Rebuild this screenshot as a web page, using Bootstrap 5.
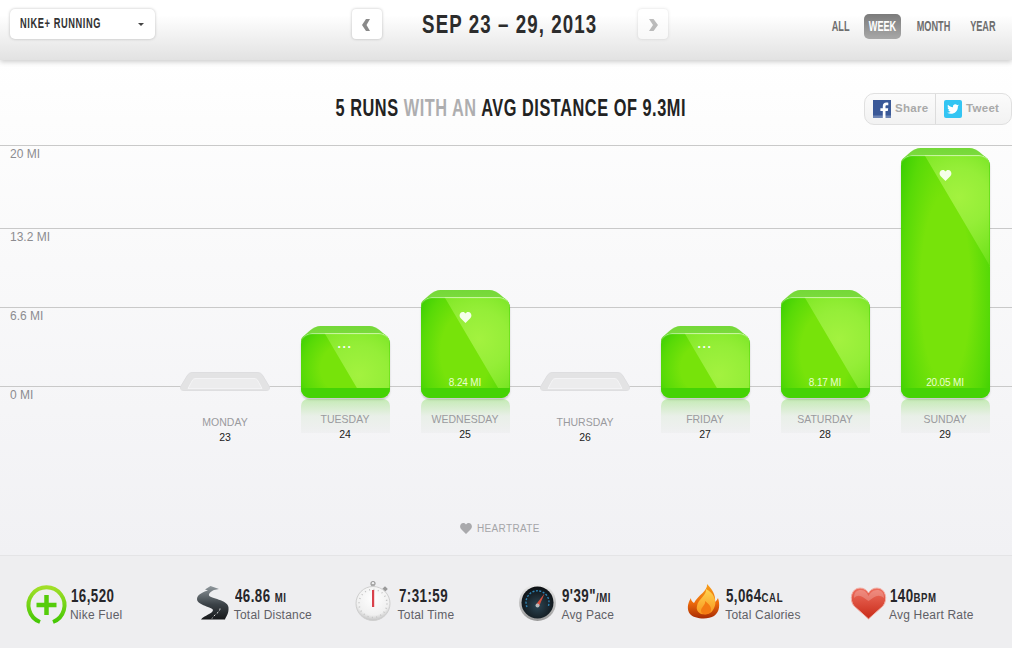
<!DOCTYPE html>
<html lang="en">
<head>
  <meta charset="UTF-8" />
  <meta name="viewport" content="width=device-width, initial-scale=1.0"/>
  <title>Nike+ Running</title>
  <link href="https://cdn.jsdelivr.net/npm/bootstrap@5.3.3/dist/css/bootstrap.min.css" rel="stylesheet">
  <style>
    html, body { height: 648px; overflow: hidden; }
    body { font-family: "Liberation Sans", Arial, sans-serif; background: linear-gradient(#fff 60px, #fdfdfd 120px, #f1f1f4 555px); color: #222; }

    /* no condensed face is installed, so the bold sans gets squeezed sideways */
    .cond { font-family: "Liberation Sans", Arial, sans-serif; font-weight: 700; }
    .squeeze { display: inline-block; white-space: nowrap; transform: scaleX(.74); transform-origin: center; }
    .squeeze-left { display: inline-block; white-space: nowrap; transform: scaleX(.74); transform-origin: left center; }
    .pick-btn .squeeze-left { transform: scaleX(.64); margin-right: -50px; }
    .date-title .squeeze { transform: scaleX(.72); }
    .run-title .squeeze { transform: scaleX(.68); }
    .range-pills .squeeze { transform: scaleX(.61); }

    /* top bar */
    .hdr-bar { height: 60px; flex: none; padding: 9px 17px 0 10px; background: linear-gradient(#fff 15px, #e2e2e2 60px); box-shadow: 0 2px 5px rgba(0,0,0,.2); position: relative; }
    .pick-btn { width: 145px; height: 30px; background: #fff; border: 0; border-radius: 5px; box-shadow: 0 0 3px rgba(0,0,0,.25); font-size: 14.500px; letter-spacing: .9px; color: #333; padding: 0 11px 0 10px; }
    .pick-btn::after { border-top-color: #444; border-width: 3px 3px 0; }
    .pick-btn:hover, .pick-btn:active { background: #fff; color: #333; }
    .arrow-btn { width: 30px; height: 30px; padding: 0; background: #fff; border: 0; border-radius: 4px; box-shadow: 0 0 3px rgba(0,0,0,.25); }
    .arrow-off { opacity: .55; }
    .date-title { font-size: 26px; line-height: 31px; letter-spacing: 1.500px; color: #2c2c2c; width: 256px; text-align: center; margin: 0; }
    .mid-group { position: absolute; left: 352px; top: 9px; }
    .range-pills { margin-top: 5px; margin-left: auto; }
    .range-pills .nav-link { font-size: 15px; padding: 0; height: 25px; color: #6e6e6e; border-radius: 5px; display: flex; align-items: center; justify-content: center; }
    .range-pills .nav-link.active { background: linear-gradient(#7b7b7b, #a8a8a8); color: #fff; }
    .pill-all { width: 16px; margin-right: 15px; }
    .pill-week { width: 37px; margin-right: 15px; }
    .pill-month { width: 34px; margin-right: 20px; }
    .pill-year { width: 25px; }

    /* headline + share */
    .head-row { height: 85px; flex: none; position: relative; }
    .run-title { font-size: 24px; letter-spacing: .8px; line-height: 26px; margin: 0; padding: 35px 0 0 10px; text-align: center; color: #222; }
    .run-title em { font-style: normal; color: #aeaeb0; }
    .share-box { position: absolute; right: 0; top: 33px; width: 148px; height: 32px; border: 1px solid #e0e0e0; border-radius: 10px; background: linear-gradient(#fbfbfb, #f2f2f2); }
    .share-item { font-size: 11.500px; font-weight: 700; color: #a9a9a9; letter-spacing: .3px; gap: 4px; padding-left: 8px; }
    .share-first { width: 70px; }
    .share-item + .share-item { border-left: 1px solid #dcdcdc; }
    .soc-ico { width: 18px; height: 18px; display: block; }

    /* chart */
    .chart-wrap { position: relative; flex: none; }
    .grid-row { border-top: 1px solid #c9c9c9; font-size: 12px; color: #8c8c90; padding: 1px 0 0 10px; line-height: 14px; }
    .grid-a { height: 83px; }
    .grid-b { height: 79px; }
    .days { position: absolute; left: 165px; top: 0; width: 840px; }
    .day-col { width: 120px; text-align: center; position: relative; }
    .bar-slot { height: 253px; display: flex; align-items: flex-end; justify-content: center; }
    .bar-box { width: 89px; position: relative; }
    .bar-lid { position: absolute; left: 0; right: 0; top: -7px; height: 16px; background: linear-gradient(#74d838, #82de42); clip-path: path('M20 0H69C73 0 76 2 79 4L87 11C88 12 89 14 89 16H0C0 14 1 12 2 11L10 4C13 2 16 0 20 0Z'); }
    .bar-face { position: relative; height: 100%; border-radius: 11px 11px 9px 9px; overflow: hidden; background: radial-gradient(ellipse 62% 85% at 50% 55%, #77e30a 45%, #58da07 78%, #3ccf03 100%); box-shadow: 0 2px 2px rgba(0,0,0,.18); color: #fff; }
    .bar-face::after { content: ""; position: absolute; inset: 0; border-radius: inherit; box-shadow: inset 0 2px 1px -1px rgba(255,255,255,.6); }
    .bar-shine { position: absolute; left: 0; right: 0; top: 0; height: 112px; clip-path: polygon(24px 0, 100% 0, 100% 100%, 90px 100%); background: radial-gradient(circle 72px at 58px 42px, #a3f23f 0, #95ee38 40%, rgba(125,232,40,.55) 100%); }
    .bar-band { position: absolute; left: 0; right: 0; bottom: 0; height: 10px; background: #45d305; }
    .bar-mark { position: absolute; top: 15px; left: 0; right: 0; text-align: center; line-height: 1; }
    .bar-mark svg { display: block; margin: 0 auto; }
    .bar-dots { top: 8px; font-size: 12px; font-weight: 700; letter-spacing: 1px; }
    .bar-dist { position: absolute; bottom: 9px; left: 0; right: 0; text-align: center; font-size: 10px; letter-spacing: -.15px; line-height: 12px; color: #eaffd0; }
    .bar-refl { position: absolute; left: 15.500px; top: 254px; width: 89px; height: 34px; border-radius: 7px 7px 0 0; background: linear-gradient(rgba(130,220,90,.42), rgba(225,236,222,.6) 50%, rgba(236,237,238,.6)); }
    .day-name { position: relative; font-size: 10.500px; line-height: 12px; color: #9a9a9e; padding-top: 15px; }
    .day-num { position: relative; font-size: 10.500px; line-height: 12px; color: #222; padding-top: 3px; }
    .day-none .day-name { padding-top: 18px; }
    .tray { display: block; margin-bottom: 7px; }

    .hr-legend { font-size: 10px; color: #a5a5a8; letter-spacing: .35px; padding-left: 460px; margin-top: 56px; gap: 5px; }

    /* stats */
    .stat-bar { margin-top: auto; height: 93px; flex: none; background: #eeeef0; border-top: 1px solid #e4e4e6; padding: 26px 0 0 26px; }
    .stat-cell { width: 163.800px; flex: none; }
    .stat-ico { width: 45px; height: 42px; flex: none; }
    .stat-ico svg { display: block; overflow: visible; }
    .stat-num { font-size: 18px; line-height: 20px; color: #26262a; letter-spacing: .6px; margin-top: 4px; white-space: nowrap; }
    .stat-num small { font-size: 13px; line-height: 1; letter-spacing: .8px; }
    .stat-lbl { font-size: 12px; line-height: 16px; color: #606066; white-space: nowrap; letter-spacing: .2px; margin: 1px 0 0 -1px; }
  </style>
</head>
<body class="d-flex flex-column">
  <!-- top bar -->
  <div class="hdr-bar d-flex align-items-start">
    <div class="dropdown">
      <button class="btn pick-btn cond dropdown-toggle d-flex align-items-center justify-content-between" type="button" data-bs-toggle="dropdown"><span class="squeeze-left">NIKE+ RUNNING</span></button>
    </div>
    <div class="mid-group d-flex align-items-start">
      <button class="btn arrow-btn" type="button" aria-label="Previous">
        <svg width="30" height="30" viewBox="0 0 30 30"><path d="M18 10 14.500 16 18 22H14L10 16 14 10Z" fill="#8a8a8a"/></svg>
      </button>
      <h1 class="date-title cond"><span class="squeeze">SEP 23 – 29, 2013</span></h1>
      <button class="btn arrow-btn arrow-off" type="button" aria-label="Next">
        <svg width="30" height="30" viewBox="0 0 30 30"><path d="M11 10 15 16 11 22H15.500L20 16 15.500 10Z" fill="#8a8a8a"/></svg>
      </button>
    </div>
    <ul class="nav range-pills cond flex-nowrap">
      <li class="nav-item pill-all"><a class="nav-link" href="#"><span class="squeeze">ALL</span></a></li>
      <li class="nav-item pill-week"><a class="nav-link active" href="#"><span class="squeeze">WEEK</span></a></li>
      <li class="nav-item pill-month"><a class="nav-link" href="#"><span class="squeeze">MONTH</span></a></li>
      <li class="nav-item pill-year"><a class="nav-link" href="#"><span class="squeeze">YEAR</span></a></li>
    </ul>
  </div>

  <!-- headline -->
  <div class="head-row">
    <h2 class="run-title cond"><span class="squeeze">5 RUNS <em>WITH AN</em> AVG DISTANCE OF 9.3MI</span></h2>
    <div class="share-box d-flex">
      <div class="share-item share-first d-flex align-items-center">
        <svg class="soc-ico" viewBox="0 0 18 18"><rect width="18" height="18" fill="#3b5998"/><rect y="15.500" width="18" height="2.500" fill="#6d84b4"/><path d="M12.500 18v-7h2.300l.4-2.800h-2.700V6.500c0-.8.300-1.300 1.400-1.300h1.400V2.700c-.3 0-1.100-.1-2-.1-2.100 0-3.500 1.300-3.500 3.600v2H7.400V11h2.400v7z" fill="#fff"/></svg>
        Share
      </div>
      <div class="share-item d-flex align-items-center flex-grow-1">
        <svg class="soc-ico" viewBox="0 0 18 18"><rect width="18" height="18" rx="2" fill="#33c5f3"/><path d="M15 5.300c-.4.200-.9.300-1.400.4.500-.3.900-.8 1.100-1.300-.5.300-1 .5-1.600.6a2.400 2.400 0 0 0-4.100 2.200c-2-.1-3.800-1.100-5-2.500-.7 1.100-.3 2.500.7 3.200-.4 0-.8-.1-1.100-.3 0 1.200.8 2.200 1.900 2.400-.4.100-.7.100-1.100 0 .3 1 1.200 1.600 2.200 1.700-1 .8-2.300 1.100-3.500 1 4.900 2.900 11-.3 10.800-6.500.5-.3.800-.6 1.100-.9z" fill="#fff"/></svg>
        Tweet
      </div>
    </div>
  </div>

  <!-- chart -->
  <div class="chart-wrap">
    <div class="grid-row grid-a">20 MI</div>
    <div class="grid-row grid-b">13.2 MI</div>
    <div class="grid-row grid-b">6.6 MI</div>
    <div class="grid-row grid-b">0 MI</div>

    <div class="days d-flex">
      <div class="day-col day-none">
        <div class="bar-slot">
          <svg class="tray" width="90" height="19" viewBox="0 0 90 19">
            <path d="M13 .5H77C80 .5 81.500 1.500 83 4L89 14C90.500 17 89 18.500 86 18.500H4C1 18.500-.5 17 1 14L7 4C8.500 1.500 10 .5 13 .5Z" fill="#e3e3e4" stroke="#dedee0"/>
            <path d="M16 6.500H74C76 6.500 77 7 78 9L82 16.500H8L12 9C13 7 14 6.500 16 6.500Z" fill="#ececed" stroke="#f6f6f7" stroke-width=".8"/>
          </svg>
        </div>
        <div class="day-name">MONDAY</div>
        <div class="day-num">23</div>
      </div>

      <div class="day-col">
        <div class="bar-slot">
          <div class="bar-box" style="height:65px">
            <div class="bar-lid"></div>
            <div class="bar-face"><div class="bar-shine"></div><div class="bar-band"></div><div class="bar-mark bar-dots">···</div></div>
          </div>
        </div>
        <div class="bar-refl"></div>
        <div class="day-name">TUESDAY</div>
        <div class="day-num">24</div>
      </div>

      <div class="day-col">
        <div class="bar-slot">
          <div class="bar-box" style="height:101px">
            <div class="bar-lid"></div>
            <div class="bar-face"><div class="bar-shine"></div><div class="bar-band"></div>
              <div class="bar-mark"><svg width="13" height="11" viewBox="0 0 12 11"><path d="M6 11 1 6C-1 3.500.5 0 3.300 0 4.500 0 5.500.7 6 1.600 6.500.7 7.500 0 8.700 0 11.500 0 13 3.500 11 6z" fill="#f4ffe8"/></svg></div>
              <div class="bar-dist">8.24 MI</div></div>
          </div>
        </div>
        <div class="bar-refl"></div>
        <div class="day-name">WEDNESDAY</div>
        <div class="day-num">25</div>
      </div>

      <div class="day-col day-none">
        <div class="bar-slot">
          <svg class="tray" width="90" height="19" viewBox="0 0 90 19">
            <path d="M13 .5H77C80 .5 81.500 1.500 83 4L89 14C90.500 17 89 18.500 86 18.500H4C1 18.500-.5 17 1 14L7 4C8.500 1.500 10 .5 13 .5Z" fill="#e3e3e4" stroke="#dedee0"/>
            <path d="M16 6.500H74C76 6.500 77 7 78 9L82 16.500H8L12 9C13 7 14 6.500 16 6.500Z" fill="#ececed" stroke="#f6f6f7" stroke-width=".8"/>
          </svg>
        </div>
        <div class="day-name">THURSDAY</div>
        <div class="day-num">26</div>
      </div>

      <div class="day-col">
        <div class="bar-slot">
          <div class="bar-box" style="height:65px">
            <div class="bar-lid"></div>
            <div class="bar-face"><div class="bar-shine"></div><div class="bar-band"></div><div class="bar-mark bar-dots">···</div></div>
          </div>
        </div>
        <div class="bar-refl"></div>
        <div class="day-name">FRIDAY</div>
        <div class="day-num">27</div>
      </div>

      <div class="day-col">
        <div class="bar-slot">
          <div class="bar-box" style="height:101px">
            <div class="bar-lid"></div>
            <div class="bar-face"><div class="bar-shine"></div><div class="bar-band"></div>
              <div class="bar-dist">8.17 MI</div></div>
          </div>
        </div>
        <div class="bar-refl"></div>
        <div class="day-name">SATURDAY</div>
        <div class="day-num">28</div>
      </div>

      <div class="day-col">
        <div class="bar-slot">
          <div class="bar-box" style="height:243px">
            <div class="bar-lid"></div>
            <div class="bar-face"><div class="bar-shine"></div><div class="bar-band"></div>
              <div class="bar-mark"><svg width="13" height="11" viewBox="0 0 12 11"><path d="M6 11 1 6C-1 3.500.5 0 3.300 0 4.500 0 5.500.7 6 1.600 6.500.7 7.500 0 8.700 0 11.500 0 13 3.500 11 6z" fill="#f4ffe8"/></svg></div>
              <div class="bar-dist">20.05 MI</div></div>
          </div>
        </div>
        <div class="bar-refl"></div>
        <div class="day-name">SUNDAY</div>
        <div class="day-num">29</div>
      </div>
    </div>
  </div>

  <div class="hr-legend d-flex align-items-center">
    <svg width="12" height="11" viewBox="0 0 12 11"><path d="M6 11 1 6C-1 3.500.5 0 3.300 0 4.500 0 5.500.7 6 1.600 6.500.7 7.500 0 8.700 0 11.500 0 13 3.500 11 6z" fill="#a9a9ac"/></svg>
    HEARTRATE
  </div>

  <!-- stats -->
  <div class="stat-bar d-flex">
    <div class="stat-cell d-flex">
      <div class="stat-ico">
        <svg width="45" height="42" viewBox="0 0 45 42">
          <defs><linearGradient id="fuelG" x1="0" y1="0" x2="0" y2="1"><stop offset="0" stop-color="#a2df28"/><stop offset="1" stop-color="#45c804"/></linearGradient></defs>
          <path d="M14 40A18 18 0 1 1 27 40" fill="none" stroke="url(#fuelG)" stroke-width="4"/>
          <path d="M20.500 13V33M10.500 23H30.500" stroke="#55cc0a" stroke-width="4.500"/>
        </svg>
      </div>
      <div><div class="stat-num cond"><span class="squeeze-left">16,520</span></div><div class="stat-lbl">Nike Fuel</div></div>
    </div>
    <div class="stat-cell d-flex">
      <div class="stat-ico">
        <svg width="45" height="42" viewBox="0 0 45 42">
          <defs><linearGradient id="roadG" x1="0" y1="0" x2="0" y2="1"><stop offset="0" stop-color="#8f979c"/><stop offset=".55" stop-color="#3b4247"/><stop offset="1" stop-color="#17191b"/></linearGradient></defs>
          <g transform="translate(6 3.500)">
            <path d="M14.500 .5 23 3.500 18 4.500C15 6 12.500 8 13 10 14 13 32 14 32.500 22 33 28 30 31 29 34H5C8 30 17 28 17 24.500 17 21.500 1 20 1 13.500 1 9 7 6.500 12 5L9 4Z" fill="url(#roadG)"/>
            <path d="M24 23c0 4-6 6-8 10" fill="none" stroke="#e8e8e8" stroke-width="1" stroke-dasharray="2 2"/>
          </g>
        </svg>
      </div>
      <div><div class="stat-num cond"><span class="squeeze-left">46.86 <small>MI</small></span></div><div class="stat-lbl">Total Distance</div></div>
    </div>
    <div class="stat-cell d-flex">
      <div class="stat-ico">
        <svg width="45" height="42" viewBox="0 0 45 42">
          <defs><radialGradient id="watchG" cx=".5" cy=".35" r=".7"><stop offset="0" stop-color="#fff"/><stop offset=".7" stop-color="#f0f0f0"/><stop offset="1" stop-color="#b5b5b5"/></radialGradient></defs>
          <circle cx="19" cy="1.500" r="2" fill="none" stroke="#999" stroke-width="1.200"/>
          <rect x="17.500" y="2" width="3" height="3" fill="#aaa"/>
          <rect x="29" y="5" width="4" height="4" fill="#999" transform="rotate(45 31 7)"/>
          <circle cx="19" cy="21.500" r="17" fill="url(#watchG)" stroke="#cfcfcf"/>
          <circle cx="19" cy="21.500" r="14" fill="none" stroke="#c4c4c4" stroke-width="1.500" stroke-dasharray="1 3.400"/>
          <rect x="18" y="8" width="2.200" height="17" fill="#d9414b"/>
        </svg>
      </div>
      <div><div class="stat-num cond"><span class="squeeze-left">7:31:59</span></div><div class="stat-lbl">Total Time</div></div>
    </div>
    <div class="stat-cell d-flex">
      <div class="stat-ico">
        <svg width="45" height="42" viewBox="0 0 45 42">
          <defs>
            <linearGradient id="rimG" x1="0" y1="0" x2="0" y2="1"><stop offset="0" stop-color="#eee"/><stop offset="1" stop-color="#999"/></linearGradient>
            <radialGradient id="dialG" cx=".5" cy=".6" r=".6"><stop offset="0" stop-color="#2c4654"/><stop offset="1" stop-color="#0c0f12"/></radialGradient>
          </defs>
          <circle cx="20.500" cy="20.500" r="18.500" fill="url(#rimG)"/>
          <circle cx="20.500" cy="20.500" r="16" fill="url(#dialG)"/>
          <path d="M10 25A11.500 11.500 0 1 1 31 25" fill="none" stroke="#2e83b3" stroke-width="1.400" stroke-dasharray="2 1.500"/>
          <path d="M19 22.500 27.500 11.500 22 24.500z" fill="#d9503f"/>
          <circle cx="20.500" cy="23.500" r="2" fill="#b9bcbe"/>
        </svg>
      </div>
      <div><div class="stat-num cond"><span class="squeeze-left">9'39"<small>/MI</small></span></div><div class="stat-lbl">Avg Pace</div></div>
    </div>
    <div class="stat-cell d-flex">
      <div class="stat-ico">
        <svg width="45" height="42" viewBox="0 0 45 42">
          <defs>
            <linearGradient id="fireG" x1="0" y1="0" x2="0" y2="1"><stop offset="0" stop-color="#f7a019"/><stop offset=".55" stop-color="#ec6a0c"/><stop offset="1" stop-color="#a82b04"/></linearGradient>
            <linearGradient id="fireH" x1="0" y1="0" x2="0" y2="1"><stop offset="0" stop-color="#ffd451"/><stop offset="1" stop-color="#f8951c"/></linearGradient>
          </defs>
          <g transform="translate(5 -1)">
            <path d="M21 3C22 10 12 14 8 22 5 20 5 18 5 17 1 23 1 29 4 33 8 38 22 39 28 35 34 31 34 23 32 17 31 19 30 20 29 21 30 14 26 8 21 3z" fill="url(#fireG)"/>
            <path d="M20 8C21 14 12 18 11 25 10 29 12 31 15 33 20 34 25 33 27 29 30 24 30 20 28 16 27 13 24 10 20 8z" fill="url(#fireH)"/>
            <path d="M19 20C20 24 15 26 15 30 15 33 19 34 22 33 25 32 26 28 24 25 23 23 21 22 19 20z" fill="#f47b12"/>
          </g>
        </svg>
      </div>
      <div><div class="stat-num cond"><span class="squeeze-left">5,064<small>CAL</small></span></div><div class="stat-lbl">Total Calories</div></div>
    </div>
    <div class="stat-cell d-flex">
      <div class="stat-ico">
        <svg width="45" height="42" viewBox="0 0 45 42">
          <defs><linearGradient id="heartG" x1="0" y1="0" x2="0" y2="1"><stop offset="0" stop-color="#ee6f5f"/><stop offset="1" stop-color="#c82a18"/></linearGradient></defs>
          <g transform="translate(5 -2)">
            <path d="M18.500 39 4 26C-1 20 1 8 10 8 14 8 17 10 18.500 13 20 10 23 8 27 8 36 8 38 20 33 26z" fill="url(#heartG)" stroke="#f2b3aa" stroke-width="1"/>
            <path d="M4 18C4 12 7 10 11 10 15 10 17 13 18.500 16 20 13 23 10 27 10 31 10 34 12 34 18 28 13 24 17 18.500 21 13 17 9 13 4 18z" fill="#fff" opacity=".22"/>
          </g>
        </svg>
      </div>
      <div><div class="stat-num cond"><span class="squeeze-left">140<small>BPM</small></span></div><div class="stat-lbl">Avg Heart Rate</div></div>
    </div>
  </div>

  <script src="https://cdn.jsdelivr.net/npm/bootstrap@5.3.3/dist/js/bootstrap.bundle.min.js"></script>
</body>
</html>
